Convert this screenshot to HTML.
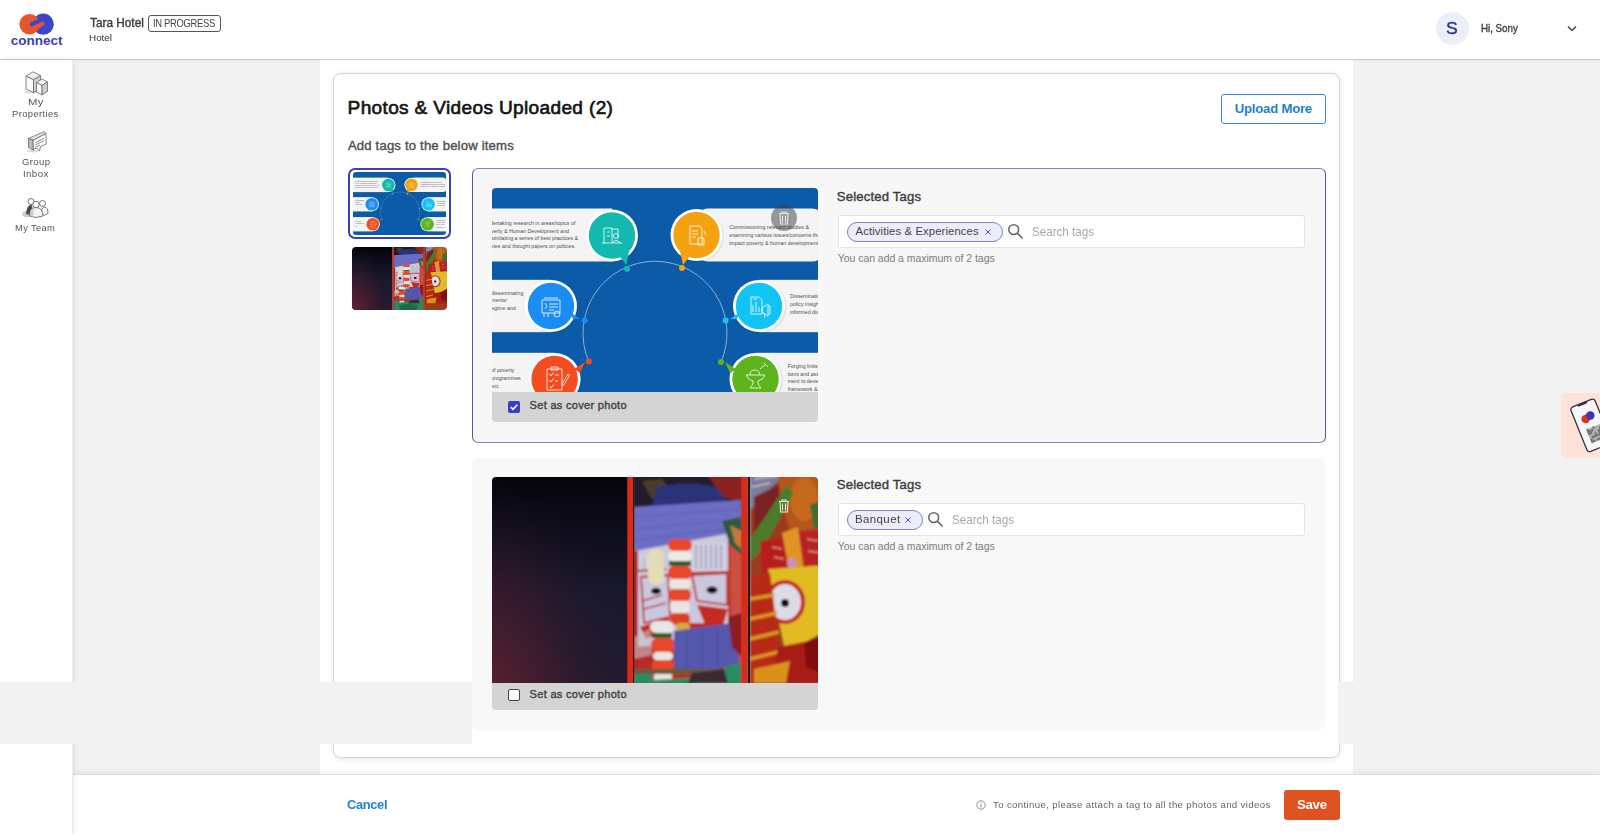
<!DOCTYPE html>
<html><head><meta charset="utf-8">
<style>
*{box-sizing:border-box;margin:0;padding:0}
html,body{width:1600px;height:835px;overflow:hidden;background:#fff;font-family:"Liberation Sans",sans-serif;color:#222}
.abs{position:absolute}
#header{position:absolute;left:0;top:0;width:1600px;height:60px;background:#fff;border-bottom:1px solid #cfcfcf;box-shadow:0 1px 3px rgba(0,0,0,0.05)}
#sidebar{position:absolute;left:0;top:60px;width:72px;height:775px;background:#fff;box-shadow:1px 0 6px rgba(0,0,0,0.12)}
#main{position:absolute;left:73px;top:60px;width:1527px;height:715px;background:#f2f2f2}
#col{position:absolute;left:320px;top:60px;width:1033px;height:715px;background:#fff}
#card{position:absolute;left:333px;top:73px;width:1007px;height:685px;background:#fff;border:1px solid #d6d6d6;border-radius:8px;box-shadow:0 1px 6px rgba(0,0,0,0.10)}
#footer{position:absolute;left:73px;top:774px;width:1527px;height:61px;background:#fff;border-top:1px solid #dedede;box-shadow:0 -2px 4px rgba(0,0,0,0.06)}
.band{position:absolute;background:#f2f2f2;z-index:3}
.panel{position:absolute;background:#f7f7f7;border-radius:6px}
.t{position:absolute;white-space:nowrap;line-height:1}
.med{-webkit-text-stroke:0.25px currentColor}
.side{font-size:10px;color:#555;text-align:center;width:73px;left:0}
</style></head><body>
<div id="main"></div>
<div id="col"></div>
<div id="header"></div>
<div id="card"></div>
<div id="footer"></div>
<div id="sidebar"></div>

<!-- header content -->
<svg class="abs" style="left:0;top:0" width="72" height="58" viewBox="0 0 72 58">
  <circle cx="43.2" cy="24.2" r="10.6" fill="#3b46c9"/>
  <circle cx="29.6" cy="24.3" r="10.2" fill="#e4572a"/>
  <path d="M31.8 24.2 L40 20.6" stroke="#3b46c9" stroke-width="4.2" stroke-linecap="round"/>
  <path d="M34.5 28.8 L42.4 23.8" stroke="#e4572a" stroke-width="4.2" stroke-linecap="round"/>
  <text x="36.6" y="45" text-anchor="middle" font-family="Liberation Sans" font-weight="700" font-size="13" fill="#3a40ad" transform="translate(36.6 0) scale(1.04 1) translate(-36.6 0)">connect</text>
</svg>
<div class="abs" style="left:147.5px;top:15px;width:73.5px;height:17px;border:1px solid #555;border-radius:3px"></div>

<div class="abs" style="left:1435.5px;top:11.5px;width:33px;height:33px;border-radius:50%;background:#eceefa"></div>
<svg class="abs" style="left:1566px;top:24px" width="12" height="9" viewBox="0 0 12 9"><path d="M2 2.5 L6 6.5 L10 2.5" fill="none" stroke="#444" stroke-width="1.5"/></svg>

<!-- sidebar -->
<svg class="abs" style="left:0;top:60px" width="72" height="170" viewBox="0 60 72 170">
  <ellipse cx="31" cy="92" rx="7" ry="1.6" fill="#ddd"/>
  <g stroke="#6a6a6a" stroke-width="0.8" stroke-linejoin="round">
    <path d="M26 76 L33 71.8 L40.5 75.5 L33.5 79.8 Z" fill="#f2f2f2"/>
    <path d="M26 76 L26 89 L33.5 92.5 L33.5 79.8 Z" fill="#fafafa"/>
    <path d="M33.5 79.8 L40.5 75.5 L40.5 88.5 L33.5 92.5 Z" fill="#cfcfcf"/>
    <path d="M36.5 82.5 L42 79 L47.5 82 L42 85.5 Z" fill="#f2f2f2"/>
    <path d="M36.5 82.5 L36.5 92 L42 95 L42 85.5 Z" fill="#fafafa"/>
    <path d="M42 85.5 L47.5 82 L47.5 91.5 L42 95 Z" fill="#cfcfcf"/>
  </g>
  <ellipse cx="33" cy="151" rx="6.5" ry="1.5" fill="#ddd"/>
  <g stroke="#666" stroke-width="0.8" stroke-linejoin="round">
    <path d="M28.5 138.5 L44.3 131.6 L45.9 133.6 L33.1 140.2 Z" fill="#e8e8e8"/>
    <path d="M28.5 138.5 L33.1 140.2 L33.4 150.3 L28.5 147.5 Z" fill="#bbb"/>
    <path d="M33.1 140.2 L45.9 133.6 L46.2 144.1 L40.5 146.6 L39.6 151 L36.8 147.9 L33.4 149.6 Z" fill="#f8f8f8"/>
    <path d="M35.2 142.6 L44 138.4 M35.2 145 L44 140.8 M35.2 147.3 L40 145.1" fill="none" stroke-width="0.7"/>
  </g>
  <g stroke="#555" stroke-width="0.8">
    <ellipse cx="27" cy="214" rx="5" ry="3.2" fill="#ccc" stroke="none"/>
    <path d="M26.5 214 Q27 205 31.5 205 L33 214 Z" fill="#444"/>
    <circle cx="31" cy="201.5" r="3" fill="#fff"/>
    <circle cx="42.5" cy="203.5" r="3" fill="#fff"/>
    <path d="M41 215 Q41 207 45 207 Q48.5 208 48 213 Q47 215.5 41 215 Z" fill="#fff"/>
    <path d="M29.5 216 Q29.5 207.5 36 207.5 Q43 207.5 43 216 Q36 219 29.5 216 Z" fill="#f4f4f4"/>
    <path d="M30 214 Q30 208 34 208 L33 217 Q30 216 30 214 Z" fill="#ccc" stroke="none"/>
    <circle cx="36" cy="204.5" r="3.2" fill="#fff"/>
  </g>
</svg>

<!-- card content -->
<div class="abs" style="left:1221px;top:94px;width:105px;height:30px;border:1px solid #3b8bd3;border-radius:3px"></div>

<div class="panel" style="left:472px;top:167.5px;width:854px;height:275.5px;border:1px solid;border-color:#8587c0 #55599c #8587c0 #55599c"></div>
<div class="panel" style="left:472px;top:458px;width:853px;height:272px;background:#f8f8f8"></div>
<svg width="0" height="0" style="position:absolute">
<defs>
<g id="info">
  <rect x="-12" y="0" width="350" height="240" fill="#0c5ba8"/>
  <!-- bands -->
  <g fill="#f4f4f4">
    <rect x="-12" y="20.5" width="132" height="53"/>
    <rect x="204" y="20.5" width="128" height="53" rx="12"/>
    <rect x="-12" y="91.8" width="71" height="52.4"/>
    <rect x="267" y="91.8" width="70" height="52.4"/>
    <rect x="-12" y="164.8" width="74.6" height="52.4"/>
    <rect x="263.5" y="164.8" width="74" height="52.4"/>
  </g>
  <!-- arc -->
  <path d="M96.8 173.6 A72 72 0 1 1 229 174" fill="none" stroke="#8cb0d8" stroke-width="1"/>
  <!-- text -->
  <g font-family="Liberation Sans" font-size="5.3" fill="#4e4e4e">
    <text x="-2" y="37">dertaking research in areas/topics of</text>
    <text x="-1" y="44.5">verty &amp; Human Development and</text>
    <text x="-1" y="52">similating a series of best practices &amp;</text>
    <text x="-1" y="59.7">vies and thought papers on policies.</text>
    <text x="237.2" y="40.8">Commissioning relevant studies &amp;</text>
    <text x="237.2" y="48.6">examining various issues/concerns tha</text>
    <text x="237.2" y="56.5">impact poverty &amp; human development.</text>
    <text x="-1" y="106.7">disseminating</text>
    <text x="-1" y="114.2">ments/</text>
    <text x="-1" y="122.1">egime and</text>
    <text x="-1" y="183.8">of poverty</text>
    <text x="-1" y="191.6">programmes</text>
    <text x="-1" y="199.5">ect.</text>
    <text x="298" y="110.4">Disseminatin</text>
    <text x="298" y="118">policy insight</text>
    <text x="298" y="125.7">informed dia</text>
    <text x="295.7" y="180">Forging links</text>
    <text x="295.7" y="187.5">tions and assi</text>
    <text x="295.7" y="195.3">ment to devel</text>
    <text x="295.7" y="203">framework &amp; i</text>
  </g>
  <!-- circles -->
  <g>
    <circle cx="121" cy="48.5" r="26.5" fill="#000" opacity="0.07"/>
    <circle cx="205.5" cy="48" r="26.5" fill="#000" opacity="0.07"/>
    <circle cx="60" cy="119" r="26.5" fill="#000" opacity="0.07"/>
    <circle cx="268" cy="119" r="26.5" fill="#000" opacity="0.07"/>
    <circle cx="63.6" cy="192" r="26.5" fill="#000" opacity="0.07"/>
    <circle cx="264.5" cy="192" r="26.5" fill="#000" opacity="0.07"/>
  </g>
  <g fill="#fff">
    <circle cx="120" cy="47.5" r="26"/>
    <circle cx="204.5" cy="47" r="26"/>
    <circle cx="59" cy="118" r="26"/>
    <circle cx="267" cy="118" r="26"/>
    <circle cx="62.6" cy="191" r="26"/>
    <circle cx="263.5" cy="191" r="26"/>
  </g>
  <circle cx="120" cy="47.5" r="23.2" fill="#13b9ae"/>
  <path d="M127 68 L137 63 L134.5 77 Z" fill="#13b9ae"/>
  <circle cx="135" cy="81" r="3" fill="#13b9ae"/>
  <circle cx="204.5" cy="47" r="23.2" fill="#f4a20f"/>
  <path d="M198 68 L188 63 L191 77 Z" fill="#f4a20f"/>
  <circle cx="190" cy="80" r="3" fill="#f4a20f"/>
  <circle cx="59" cy="118" r="23.2" fill="#1a8df2"/>
  <path d="M78 124 L81 131 L88 131 Z" fill="#1a8df2"/>
  <circle cx="92.6" cy="132.6" r="3" fill="#1a8df2"/>
  <circle cx="267" cy="118" r="23.2" fill="#12c3f6"/>
  <path d="M248 124 L245 131 L238 131 Z" fill="#12c3f6"/>
  <circle cx="233.6" cy="132.6" r="3" fill="#12c3f6"/>
  <circle cx="62.6" cy="191" r="23.2" fill="#f34c1e"/>
  <path d="M82 181 L88 185 L93 174 Z" fill="#f34c1e"/>
  <circle cx="96.8" cy="173.6" r="3" fill="#f34c1e"/>
  <circle cx="263.5" cy="191" r="23.2" fill="#5db41c"/>
  <path d="M244 181 L238 185 L233 174 Z" fill="#5db41c"/>
  <circle cx="229" cy="174" r="3" fill="#5db41c"/>
  <!-- icons -->
  <g fill="none" stroke="#fff" stroke-width="0.9" opacity="0.9">
    <path d="M110 55 L130 55 M112 55 V40 H120 V55 M115 44 H118 M115 48 H118 M120 41 H126 V50"/>
    <circle cx="124" cy="48" r="2.5"/><path d="M120 55 Q124 50 128 55"/>
    <path d="M198 38 H208 L210 41 V56 H198 Z M200 43 H206 M200 46 H206 M200 49 H204 M206 50 H212 V57 H206 Z M212 43 L214 47"/>
    <path d="M50 112 H68 V125 H50 Z M52 110 H66 M57 116 H66 M57 119 H66 M57 122 H62 M53 115 L55 118 L53 121"/><circle cx="65" cy="126" r="3"/><path d="M52 125 V129 M56 125 V129"/>
    <path d="M259 109 H267 L270 112 V126 H259 Z M261 117 V124 M264 114 V124 M267 119 V124 M261 111 H265"/>
    <path d="M270 120 L276 116 V128 L270 124 Z M276 118 H278 V126 H276 M272 125 L273 130"/>
    <path d="M55 181 H70 V202 H55 Z M59 179 H66 V182 H59 Z M57.5 186 L59 188 L61.5 184.5 M57.5 192 L59 194 L61.5 190.5 M57.5 198 L59 200 L61.5 196.5 M63 187 H67 M63 193 H66 M70 196 L76 186 L77.5 187.5 L71.5 197.5 Z"/>
    <path d="M254 187 H273 Q271 192 266 193 V196 L269 200 H258 L261 196 V193 Q256 192 254 187 Z M258 187 Q258 182 263 182 Q267 182 268 187 M268 181 L274 176 M272 175 L276 179"/>
  </g>
</g>

<g id="jag">
  <defs>
    <linearGradient id="jgL" x1="0" y1="0" x2="0" y2="1">
      <stop offset="0" stop-color="#04040b"/>
      <stop offset="0.5" stop-color="#1a182e"/>
      <stop offset="1" stop-color="#241c30"/>
    </linearGradient>
    <radialGradient id="jgL2" cx="0.0" cy="1.0" r="1.0">
      <stop offset="0" stop-color="#6e2232" stop-opacity="0.95"/>
      <stop offset="0.55" stop-color="#4a1c2c" stop-opacity="0.5"/>
      <stop offset="1" stop-color="#201828" stop-opacity="0"/>
    </radialGradient>
    <filter id="soft" x="-5%" y="-5%" width="110%" height="110%"><feGaussianBlur stdDeviation="0.9"/></filter>
  </defs>
  <rect x="-13" y="-2" width="150" height="240" fill="url(#jgL)"/>
  <rect x="-13" y="-2" width="150" height="240" fill="url(#jgL2)"/>
  <g filter="url(#soft)">
  <!-- center panel -->
  <rect x="141" y="-2" width="110" height="240" fill="#b82a28"/>
  <rect x="141" y="-2" width="110" height="32" fill="#241c2a"/>
  <path d="M150 4 L170 2 L180 14 L160 22 Z" fill="#5a4a2a" opacity="0.7"/>
  <path d="M165 10 Q200 2 232 12 L235 28 L160 30 Z" fill="#2a3278"/>
  <path d="M215 -2 H251 V26 L232 20 Z" fill="#8a2222"/>
  <path d="M142 30 L249.5 23 L249.5 54 L142 74 Z" fill="#6c6dc4"/>
  <path d="M142 40 L249.5 32 M142 52 L249.5 42 M142 63 L249.5 50" stroke="#5c5cb0" stroke-width="1" fill="none"/>
  <!-- face -->
  <path d="M142 74 L249.5 54 L249.5 162 L142 170 Z" fill="#cac8de"/>
  <path d="M200 66 H234 V94 H200 Z" fill="#d2d0e2"/>
  <path d="M204 68 V92 M209 68 V92 M214 68 V92 M219 68 V92 M224 68 V92 M229 68 V92" stroke="#8a86a0" stroke-width="1.1"/>
  <path d="M148 78 L170 76 L172 92 L150 94 Z" fill="#d6d4e4"/>
  <path d="M152 80 V92 M157 80 V92 M162 79 V92" stroke="#9a96aa" stroke-width="1"/>
  <path d="M146 94 L174 92 M200 96 L236 95" stroke="#c02a26" stroke-width="2"/>
  <path d="M149 100 L176 98 L178 140 L152 146 Z" fill="none" stroke="#c02a26" stroke-width="1.8"/>
  <path d="M200 98 L235 96 L235 128 L205 124 Z" fill="none" stroke="#c02a26" stroke-width="1.8"/>
  <path d="M148 150 L176 140 L182 150 L154 162 Z" fill="#c42a24"/>
  <path d="M205 128 L236 132 L230 152 L214 150 Z" fill="#c42a24"/>
  <path d="M150 124 L170 118 M152 132 L174 126" stroke="#c02a26" stroke-width="1.5"/>
  <ellipse cx="164" cy="114" rx="5" ry="3.2" fill="#141014"/>
  <ellipse cx="220" cy="113" rx="5.5" ry="3.6" fill="#141014"/>
  <rect x="196" y="146" width="36" height="8" fill="#c02a22"/>
  <rect x="236" y="56" width="14" height="150" fill="#c03a30"/>
  <path d="M238 60 L249.5 58 V200 L241 200 Z" fill="#d06050" opacity="0.6"/>
  <rect x="142" y="74" width="4" height="132" fill="#b22822"/>
  <path d="M230 44 L249.5 40 V78 L238 68 Z" fill="#2a5a40"/>
  <path d="M238 48 L249.5 54 V72 L243 66 Z" fill="#c87a30"/>
  <!-- garlands -->
  <g>
    <rect x="156" y="72" width="16" height="36" rx="7" fill="#e2dcb8"/>
    <rect x="176" y="62" width="24" height="12" rx="6" fill="#e8462a"/>
    <rect x="176" y="74" width="24" height="10" rx="5" fill="#ecebe6"/>
    <rect x="177" y="84" width="22" height="5" fill="#2e5a2a"/>
    <rect x="176" y="89" width="24" height="13" rx="6" fill="#e8462a"/>
    <rect x="177" y="102" width="22" height="10" rx="5" fill="#e8e6e2"/>
    <rect x="177" y="112" width="22" height="12" rx="5" fill="#e4462a"/>
    <rect x="178" y="124" width="20" height="12" rx="5" fill="#e8e6e2"/>
    <rect x="178" y="136" width="20" height="12" rx="5" fill="#dc4024"/>
    <rect x="184" y="146" width="14" height="9" rx="4" fill="#d8a840"/>
    <rect x="158" y="144" width="24" height="12" rx="6" fill="#e8e6e2"/>
    <rect x="160" y="156" width="20" height="5" fill="#2e5a2a"/>
    <rect x="159" y="161" width="24" height="14" rx="6" fill="#e8462a"/>
    <rect x="161" y="175" width="20" height="8" rx="4" fill="#e8e6e2"/>
    <rect x="160" y="183" width="22" height="12" rx="5" fill="#e4462a"/>
    <rect x="162" y="195" width="18" height="11" rx="4" fill="#e8e6e2"/>
  </g>
  <path d="M182 154 L240 146 L248 186 L200 198 L182 190 Z" fill="#5558ac"/>
  <path d="M195 156 V192 M210 152 V195 M225 150 V190" stroke="#4a4c98" stroke-width="1.2"/>
  <path d="M236 140 L249.5 136 V180 L240 170 Z" fill="#8a1c24"/>
  <path d="M142 160 L158 152 L160 178 L142 182 Z" fill="#c8c2c8" opacity="0.6"/>
  <rect x="142" y="192" width="108" height="5" fill="#6a5a38"/>
  <path d="M142 197 H160 V206 H142 Z" fill="#2a8a62"/>
  <path d="M142 204 L249.5 198 V240 H142 Z" fill="#2a8a60"/>
  <path d="M160 212 L200 206 L230 214 L220 240 H170 Z" fill="#1e6a48"/>
  <path d="M232 190 L249.5 186 V206 H228 Z" fill="#2c8c64"/>
  <path d="M200 196 L232 192 L236 206 H196 Z" fill="#3a2a30"/>
  <!-- right panel -->
  <rect x="258" y="-2" width="80" height="240" fill="#9c3a1a"/>
  <path d="M258 -2 H292 L280 10 L262 30 L258 32 Z" fill="#7a7c9c"/>
  <path d="M262 2 L285 -1 M260 10 L278 6" stroke="#c8c0c8" stroke-width="1.5"/>
  <path d="M262 20 L286 8 L290 40 L262 60 Z" fill="#7a2420"/>
  <path d="M286 -2 H338 V62 L300 58 L290 30 Z" fill="#b4561a"/>
  <ellipse cx="312" cy="22" rx="14" ry="22" fill="#cc6e1e" opacity="0.8"/>
  <path d="M294 8 L302 16 L272 70 L260 84 L258 62 L276 36 Z" fill="#4c7c2c"/>
  <path d="M318 28 L338 20 V52 L322 52 Z" fill="#3e6c30"/>
  <path d="M268 64 L298 60 L300 96 L270 96 Z" fill="#b81c1c"/>
  <path d="M306 54 L338 52 V100 L308 100 Z" fill="#b82020"/>
  <path d="M280 70 L290 72 M282 80 L292 82 M315 62 L326 64 M316 74 L330 76" stroke="#e8b0a0" stroke-width="1.2"/>
  <path d="M290 56 L306 50 L312 94 L298 98 Z" fill="#e29422"/>
  <circle cx="300" cy="86" r="5" fill="#c890c0"/>
  <path d="M276 92 L338 88 V176 L294 178 Z" fill="#e0bc22"/>
  <ellipse cx="293" cy="125" rx="20" ry="22" fill="#c02020"/>
  <ellipse cx="293" cy="125" rx="16" ry="18" fill="#dddbe6"/>
  <circle cx="293" cy="126" r="4" fill="#111"/>
  <path d="M258 100 L278 96 L292 206 H258 Z" fill="#b82a18"/>
  <path d="M258 122 L282 118 M258 142 L285 136 M258 162 L287 155 M258 182 L290 174" stroke="#d89a22" stroke-width="3.5"/>
  <path d="M286 170 L338 160 V206 H280 Z" fill="#a81a18"/>
  <path d="M262 192 L298 184 L294 206 H262 Z" fill="#dc901e"/>
  <path d="M312 166 L338 152 V200 L314 190 Z" fill="#801010"/>
  </g>
  <!-- bars -->
  <rect x="135.3" y="-2" width="5.7" height="240" fill="#dc2a1a"/>
  <rect x="141" y="-2" width="1.3" height="240" fill="#221818"/>
  <rect x="249.4" y="-2" width="6.2" height="240" fill="#dc2a1a"/>
  <rect x="255.6" y="-2" width="2.6" height="240" fill="#231a1a"/>
</g>

</defs>
</svg>
<!-- image 1 -->
<div class="abs" style="left:492px;top:188px;width:326px;height:234px;border-radius:4px;overflow:hidden">
 <svg class="abs" style="left:0;top:0" width="326" height="204" viewBox="0 0 326 204"><use href="#info"/></svg>
 <div class="abs" style="left:0;top:204px;width:326px;height:30px;background:#d4d4d4"></div>
</div>
<div class="abs" style="left:771px;top:205px;width:26px;height:26px;border-radius:50%;background:rgba(60,60,60,0.5)"></div>
<svg class="abs" style="left:776px;top:210px" width="16" height="16" viewBox="0 0 16 16"><path d="M3 3.5 H13 M6 3.5 V2 H10 V3.5 M4 3.5 L4.6 14 H11.4 L12 3.5 M6.5 5.5 V12.5 M9.5 5.5 V12.5" fill="none" stroke="#e8e8e8" stroke-width="1.1"/></svg>
<div class="abs" style="left:508px;top:401px;width:12px;height:12px;border-radius:2px;background:#3a3fc2"></div>
<svg class="abs" style="left:508px;top:401px" width="12" height="12" viewBox="0 0 12 12"><path d="M2.8 6.2 L5 8.3 L9.3 3.8" fill="none" stroke="#fff" stroke-width="1.6"/></svg>

<!-- image 2 -->
<div class="abs" style="left:492px;top:477px;width:326px;height:233px;border-radius:4px;overflow:hidden">
 <svg class="abs" style="left:0;top:0" width="326" height="205.5" viewBox="0 0 326 205.5"><use href="#jag"/></svg>
 <div class="abs" style="left:0;top:205.5px;width:326px;height:28px;background:#d4d4d4"></div>
</div>
<svg class="abs" style="left:776px;top:498px" width="16" height="16" viewBox="0 0 16 16"><path d="M3 3.5 H13 M6 3.5 V2 H10 V3.5 M4 3.5 L4.6 14 H11.4 L12 3.5 M6.5 5.5 V12.5 M9.5 5.5 V12.5" fill="none" stroke="#e8e8e8" stroke-width="1.1"/></svg>
<div class="abs" style="left:508px;top:689px;width:12px;height:12px;border-radius:2px;background:#fff;border:1.5px solid #444"></div>

<!-- thumbnails -->
<div class="abs" style="left:348px;top:167.5px;width:103px;height:71.5px;border:2.5px solid #3d40b2;border-radius:7px"></div>
<svg class="abs" style="left:352.6px;top:171.6px;border-radius:3px" width="93.4" height="63.2" viewBox="-9.6 0 342 231" preserveAspectRatio="none"><use href="#info"/></svg>
<svg class="abs" style="left:351.8px;top:246.7px;border-radius:4px" width="94.8" height="63" viewBox="-12.2 -0.6 347.9 231.2" preserveAspectRatio="none"><use href="#jag"/></svg>

<!-- tags panel 1 -->
<div class="abs" style="left:837.5px;top:215px;width:467px;height:33px;background:#fff;border:1px solid #e4e4e4;border-radius:3px"></div>
<div class="abs" style="left:847px;top:221.5px;width:155.5px;height:20.5px;background:#ededfa;border:1px solid #7d80c2;border-radius:11px"></div>
<svg class="abs" style="left:984px;top:228px" width="8" height="8" viewBox="0 0 8 8"><path d="M1.5 1.5 L6.5 6.5 M6.5 1.5 L1.5 6.5" stroke="#4446b4" stroke-width="0.95"/></svg>
<svg class="abs" style="left:1007px;top:223px" width="17" height="17" viewBox="0 0 17 17"><circle cx="6.7" cy="6.6" r="4.9" fill="none" stroke="#6a6a6a" stroke-width="1.6"/><path d="M10.3 10.2 L15.6 15.5" stroke="#6a6a6a" stroke-width="1.7"/></svg>

<!-- tags panel 2 -->
<div class="abs" style="left:837.5px;top:503px;width:467px;height:33px;background:#fff;border:1px solid #e4e4e4;border-radius:3px"></div>
<div class="abs" style="left:847px;top:509.5px;width:75.5px;height:20.5px;background:#ededfa;border:1px solid #7d80c2;border-radius:11px"></div>
<svg class="abs" style="left:904px;top:516px" width="8" height="8" viewBox="0 0 8 8"><path d="M1.5 1.5 L6.5 6.5 M6.5 1.5 L1.5 6.5" stroke="#4446b4" stroke-width="0.95"/></svg>
<svg class="abs" style="left:927px;top:511px" width="17" height="17" viewBox="0 0 17 17"><circle cx="6.7" cy="6.6" r="4.9" fill="none" stroke="#6a6a6a" stroke-width="1.6"/><path d="M10.3 10.2 L15.6 15.5" stroke="#6a6a6a" stroke-width="1.7"/></svg>

<!-- footer -->
<svg class="abs" style="left:976px;top:799.5px" width="10" height="10" viewBox="0 0 10 10"><circle cx="5" cy="5" r="4.2" fill="none" stroke="#888" stroke-width="0.9"/><path d="M5 4.3 V7.5 M5 2.6 V3.4" stroke="#888" stroke-width="1"/></svg>
<div class="abs" style="left:1284px;top:790px;width:56px;height:30px;background:#e0521f;border-radius:3px"></div>

<!-- floating widget -->
<div class="abs" style="left:1561px;top:393px;width:39px;height:65px;background:#fde2da;border-radius:5px 0 0 5px"></div>
<svg class="abs" style="left:1561px;top:393px" width="39" height="65" viewBox="0 0 39 65">
  <g transform="translate(9 15) rotate(-22)">
    <rect x="0" y="0" width="26" height="48" rx="3" fill="#f6f6fb" stroke="#3a3232" stroke-width="1.3"/>
    <rect x="8" y="-0.3" width="10" height="2.2" rx="1" fill="#3a3232"/>
    <circle cx="10.5" cy="16" r="4.3" fill="#d8361e"/>
    <circle cx="16" cy="14.5" r="4.3" fill="#3436c0"/>
    <path d="M12 17.5 L15 13" stroke="#8a2a7a" stroke-width="1.2"/>
    <rect x="7" y="26" width="15" height="15" fill="#b0b0b0"/><g fill="#707070"><rect x="7.0" y="26.0" width="2.1" height="2.1"/><rect x="7.0" y="28.1" width="2.1" height="2.1"/><rect x="7.0" y="30.2" width="2.1" height="2.1"/><rect x="7.0" y="36.5" width="2.1" height="2.1"/><rect x="7.0" y="38.6" width="2.1" height="2.1"/><rect x="9.1" y="28.1" width="2.1" height="2.1"/><rect x="9.1" y="30.2" width="2.1" height="2.1"/><rect x="9.1" y="34.4" width="2.1" height="2.1"/><rect x="9.1" y="38.6" width="2.1" height="2.1"/><rect x="11.2" y="28.1" width="2.1" height="2.1"/><rect x="11.2" y="34.4" width="2.1" height="2.1"/><rect x="13.3" y="26.0" width="2.1" height="2.1"/><rect x="13.3" y="32.3" width="2.1" height="2.1"/><rect x="13.3" y="34.4" width="2.1" height="2.1"/><rect x="13.3" y="38.6" width="2.1" height="2.1"/><rect x="15.4" y="34.4" width="2.1" height="2.1"/><rect x="15.4" y="38.6" width="2.1" height="2.1"/><rect x="17.5" y="30.2" width="2.1" height="2.1"/><rect x="17.5" y="32.3" width="2.1" height="2.1"/><rect x="17.5" y="34.4" width="2.1" height="2.1"/><rect x="17.5" y="38.6" width="2.1" height="2.1"/><rect x="19.6" y="28.1" width="2.1" height="2.1"/><rect x="19.6" y="30.2" width="2.1" height="2.1"/><rect x="19.6" y="32.3" width="2.1" height="2.1"/><rect x="19.6" y="34.4" width="2.1" height="2.1"/></g>
  </g>
</svg>

<div class="band" style="left:0;top:682px;width:472px;height:62px"></div>
<div class="band" style="left:1338px;top:682px;width:15px;height:62px"></div>
<div class="t" style="left:90.20px;top:16.88px;font-size:12.08px;color:#3c3c3c;-webkit-text-stroke:0.4px #3c3c3c;transform:scaleX(0.9778);transform-origin:0 0;">Tara Hotel</div>
<div class="t" style="left:152.68px;top:19.43px;font-size:10.20px;color:#444;letter-spacing:-0.350px;transform:scaleX(0.9248);transform-origin:0 0;">IN PROGRESS</div>
<div class="t" style="left:89.24px;top:33.86px;font-size:8.52px;color:#333;transform:scaleX(1.1588);transform-origin:0 0;">Hotel</div>
<div class="t" style="left:1445.93px;top:20.09px;font-size:16.48px;color:#2b3587;-webkit-text-stroke:0.4px #2b3587;transform:scaleX(1.0667);transform-origin:0 0;">S</div>
<div class="t" style="left:1480.67px;top:23.70px;font-size:10.47px;color:#444;-webkit-text-stroke:0.4px #444;transform:scaleX(0.9308);transform-origin:0 0;">Hi, Sony</div>
<div class="t" style="left:27.88px;top:98.26px;font-size:9.22px;color:#555;letter-spacing:0.350px;transform:scaleX(1.2247);transform-origin:0 0;">My</div>
<div class="t" style="left:12.37px;top:109.96px;font-size:9.22px;color:#555;letter-spacing:0.350px;transform:scaleX(1.0260);transform-origin:0 0;">Properties</div>
<div class="t" style="left:22.20px;top:158.06px;font-size:9.22px;color:#555;letter-spacing:0.350px;transform:scaleX(1.0341);transform-origin:0 0;">Group</div>
<div class="t" style="left:23.14px;top:169.66px;font-size:9.22px;color:#555;letter-spacing:0.350px;transform:scaleX(1.0580);transform-origin:0 0;">Inbox</div>
<div class="t" style="left:15.29px;top:224.16px;font-size:9.22px;color:#555;letter-spacing:0.350px;transform:scaleX(1.0131);transform-origin:0 0;">My Team</div>
<div class="t" style="left:347.59px;top:97.90px;font-size:19.06px;color:#141414;-webkit-text-stroke:0.65px #141414;letter-spacing:0.350px;">Photos &amp; Videos Uploaded (2)</div>
<div class="t" style="left:347.90px;top:138.94px;font-size:13.13px;color:#505050;-webkit-text-stroke:0.4px #505050;letter-spacing:0.177px;">Add tags to the below items</div>
<div class="t" style="left:1234.70px;top:102.04px;font-size:13.13px;color:#1f7fd5;font-weight:700;letter-spacing:-0.200px;">Upload More</div>
<div class="t" style="left:529.60px;top:400.42px;font-size:11.03px;color:#444;-webkit-text-stroke:0.4px #444;letter-spacing:0.300px;">Set as cover photo</div>
<div class="t" style="left:529.60px;top:689.22px;font-size:11.03px;color:#444;-webkit-text-stroke:0.4px #444;letter-spacing:0.300px;">Set as cover photo</div>
<div class="t" style="left:836.80px;top:189.54px;font-size:13.13px;color:#3d3d3d;-webkit-text-stroke:0.4px #3d3d3d;letter-spacing:0.175px;">Selected Tags</div>
<div class="t" style="left:836.80px;top:477.54px;font-size:13.13px;color:#3d3d3d;-webkit-text-stroke:0.4px #3d3d3d;letter-spacing:0.175px;">Selected Tags</div>
<div class="t" style="left:855.60px;top:225.78px;font-size:11.31px;color:#444;letter-spacing:0.109px;">Activities &amp; Experiences</div>
<div class="t" style="left:1031.98px;top:226.12px;font-size:12.57px;color:#a8a8a8;transform:scaleX(0.9242);transform-origin:0 0;">Search tags</div>
<div class="t" style="left:837.75px;top:254.40px;font-size:10.47px;color:#7c7c7c;letter-spacing:-0.033px;">You can add a maximum of 2 tags</div>
<div class="t" style="left:854.58px;top:513.78px;font-size:11.31px;color:#444;letter-spacing:0.350px;transform:scaleX(1.0209);transform-origin:0 0;">Banquet</div>
<div class="t" style="left:951.58px;top:514.12px;font-size:12.57px;color:#a8a8a8;transform:scaleX(0.9242);transform-origin:0 0;">Search tags</div>
<div class="t" style="left:837.75px;top:542.40px;font-size:10.47px;color:#7c7c7c;letter-spacing:-0.033px;">You can add a maximum of 2 tags</div>
<div class="t" style="left:347.25px;top:797.87px;font-size:13.27px;color:#1f82d8;font-weight:700;letter-spacing:-0.350px;transform:scaleX(0.9697);transform-origin:0 0;">Cancel</div>
<div class="t" style="left:993.25px;top:800.33px;font-size:9.50px;color:#666;letter-spacing:0.350px;transform:scaleX(1.0137);transform-origin:0 0;">To continue, please attach a tag to all the photos and videos</div>
<div class="t" style="left:1296.53px;top:797.77px;font-size:13.69px;color:#ffffff;font-weight:700;letter-spacing:-0.350px;transform:scaleX(0.9716);transform-origin:0 0;">Save</div>
</body></html>
